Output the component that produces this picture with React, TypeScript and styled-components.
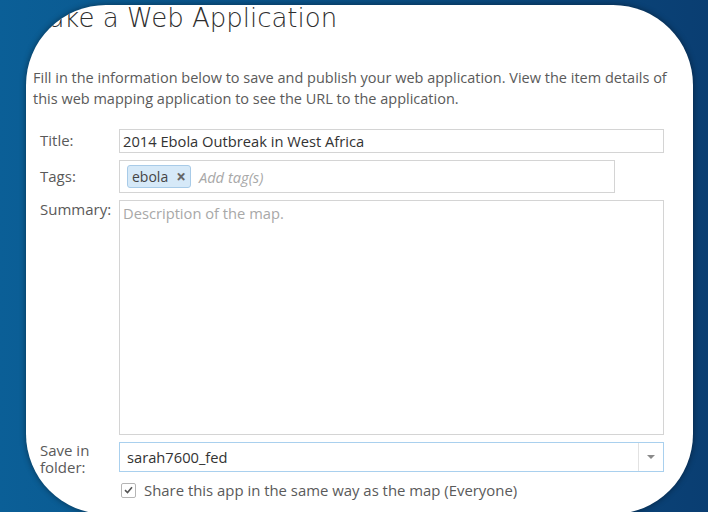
import styled, { createGlobalStyle } from "styled-components";

const GlobalStyle = createGlobalStyle`
  html, body {
    margin: 0;
    padding: 0;
    height: 512px;
    overflow: hidden;
  }
  body {
    background: linear-gradient(90deg, #0b5f97 0%, #0a5288 45%, #0a3e72 100%);
    font-family: "Open Sans", "DejaVu Sans", sans-serif;
  }
`;

const Stage = styled.div`
  padding: 5px 0 0 26px;
`;

const Panel = styled.div`
  width: 667px;
  height: 509px;
  background: #fff;
  border-radius: 80px;
  overflow: hidden;
  box-shadow: 0 0 6px rgba(0, 0, 0, 0.45);
  padding-left: 7px;
  box-sizing: border-box;
`;

const Heading = styled.h1`
  margin: -3px 0 0 -7px;
  font-family: "DejaVu Sans", "Open Sans", sans-serif;
  font-weight: 200;
  font-size: 26px;
  line-height: 32px;
  color: #2e2e2e;
  white-space: nowrap;
`;

const Intro = styled.p`
  margin: 33px 0 0 0;
  width: 645px;
  font-size: 14.5px;
  line-height: 21px;
  color: #5a5a5a;
`;

const Form = styled.div`
  display: grid;
  grid-template-columns: 79px 545px;
  margin: 20px 0 0 7px;
`;

const Label = styled.label<{ $top: number; $gap: number }>`
  font-size: 15px;
  line-height: 17px;
  color: #5a5a5a;
  padding-top: ${(p) => p.$top}px;
  margin-top: ${(p) => p.$gap}px;
`;

const Field = styled.div<{ $h: number; $w?: number; $gap: number; $focus?: boolean }>`
  box-sizing: border-box;
  height: ${(p) => p.$h}px;
  width: ${(p) => (p.$w ? `${p.$w}px` : "100%")};
  margin-top: ${(p) => p.$gap}px;
  border: 1px solid ${(p) => (p.$focus ? "#a9d0ee" : "#d4d4d4")};
  background: #fff;
  font-size: 14.7px;
  color: #333;
  display: flex;
  align-items: center;
  padding-left: 3px;
`;

const Area = styled(Field)`
  align-items: flex-start;
  padding-top: 2px;
`;

const Placeholder = styled.span<{ $italic?: boolean }>`
  color: #a8a8a8;
  font-style: ${(p) => (p.$italic ? "italic" : "normal")};
`;

const Tag = styled.span`
  display: inline-flex;
  align-items: center;
  gap: 8px;
  height: 23px;
  box-sizing: border-box;
  padding: 0 4px 0 4px;
  margin: 0 8px 0 4px;
  background: #d6e9f8;
  border: 1px solid #a8cbe8;
  border-radius: 3px;
  color: #444;
  font-size: 14px;
`;

const TagClose = styled.span`
  font-weight: 700;
  color: #666;
  font-size: 17px;
  line-height: 16px;
`;

const Select = styled(Field)`
  padding-left: 7px;
  justify-content: space-between;
  padding-right: 0;
`;

const Caret = styled.span`
  width: 24px;
  height: 100%;
  border-left: 1px solid #e2e2e2;
  display: flex;
  align-items: center;
  justify-content: center;
  &::after {
    content: "";
    border-left: 4px solid transparent;
    border-right: 4px solid transparent;
    border-top: 4px solid #8a8a8a;
  }
`;

const CheckRow = styled.label`
  grid-column: 2;
  display: flex;
  align-items: center;
  gap: 8px;
  margin-top: 4px;
  padding-left: 2px;
  font-size: 14.9px;
  color: #5a5a5a;
`;

const Box = styled.span`
  width: 13px;
  height: 13px;
  border: 1px solid #b5b5b5;
  border-radius: 2px;
  display: flex;
  align-items: center;
  justify-content: center;
`;

function App() {
  return (
    <>
      <GlobalStyle />
      <Stage>
        <Panel>
          <Heading>Make a Web Application</Heading>
          <Intro>
            Fill in the information below to save and publish your web application. View the item details of
            this web mapping application to see the URL to the application.
          </Intro>
          <Form>
            <Label $top={3} $gap={0}>Title:</Label>
            <Field $h={24} $gap={0}>2014 Ebola Outbreak in West Africa</Field>

            <Label $top={8} $gap={7}>Tags:</Label>
            <Field $h={33} $w={496} $gap={7}>
              <Tag>
                ebola<TagClose>×</TagClose>
              </Tag>
              <Placeholder $italic>Add tag(s)</Placeholder>
            </Field>

            <Label $top={1} $gap={7}>Summary:</Label>
            <Area $h={235} $gap={7}>
              <Placeholder>Description of the map.</Placeholder>
            </Area>

            <Label $top={0} $gap={7}>
              Save in
              <br />
              folder:
            </Label>
            <Select $h={30} $gap={7} $focus>
              sarah7600_fed
              <Caret />
            </Select>

            <CheckRow>
              <Box>
                <svg width="9" height="8" viewBox="0 0 9 8">
                  <path d="M1 4.2 L3.5 6.5 L8 1.2" fill="none" stroke="#555" strokeWidth="1.6" />
                </svg>
              </Box>
              Share this app in the same way as the map (Everyone)
            </CheckRow>
          </Form>
        </Panel>
      </Stage>
    </>
  );
}

export default App;
